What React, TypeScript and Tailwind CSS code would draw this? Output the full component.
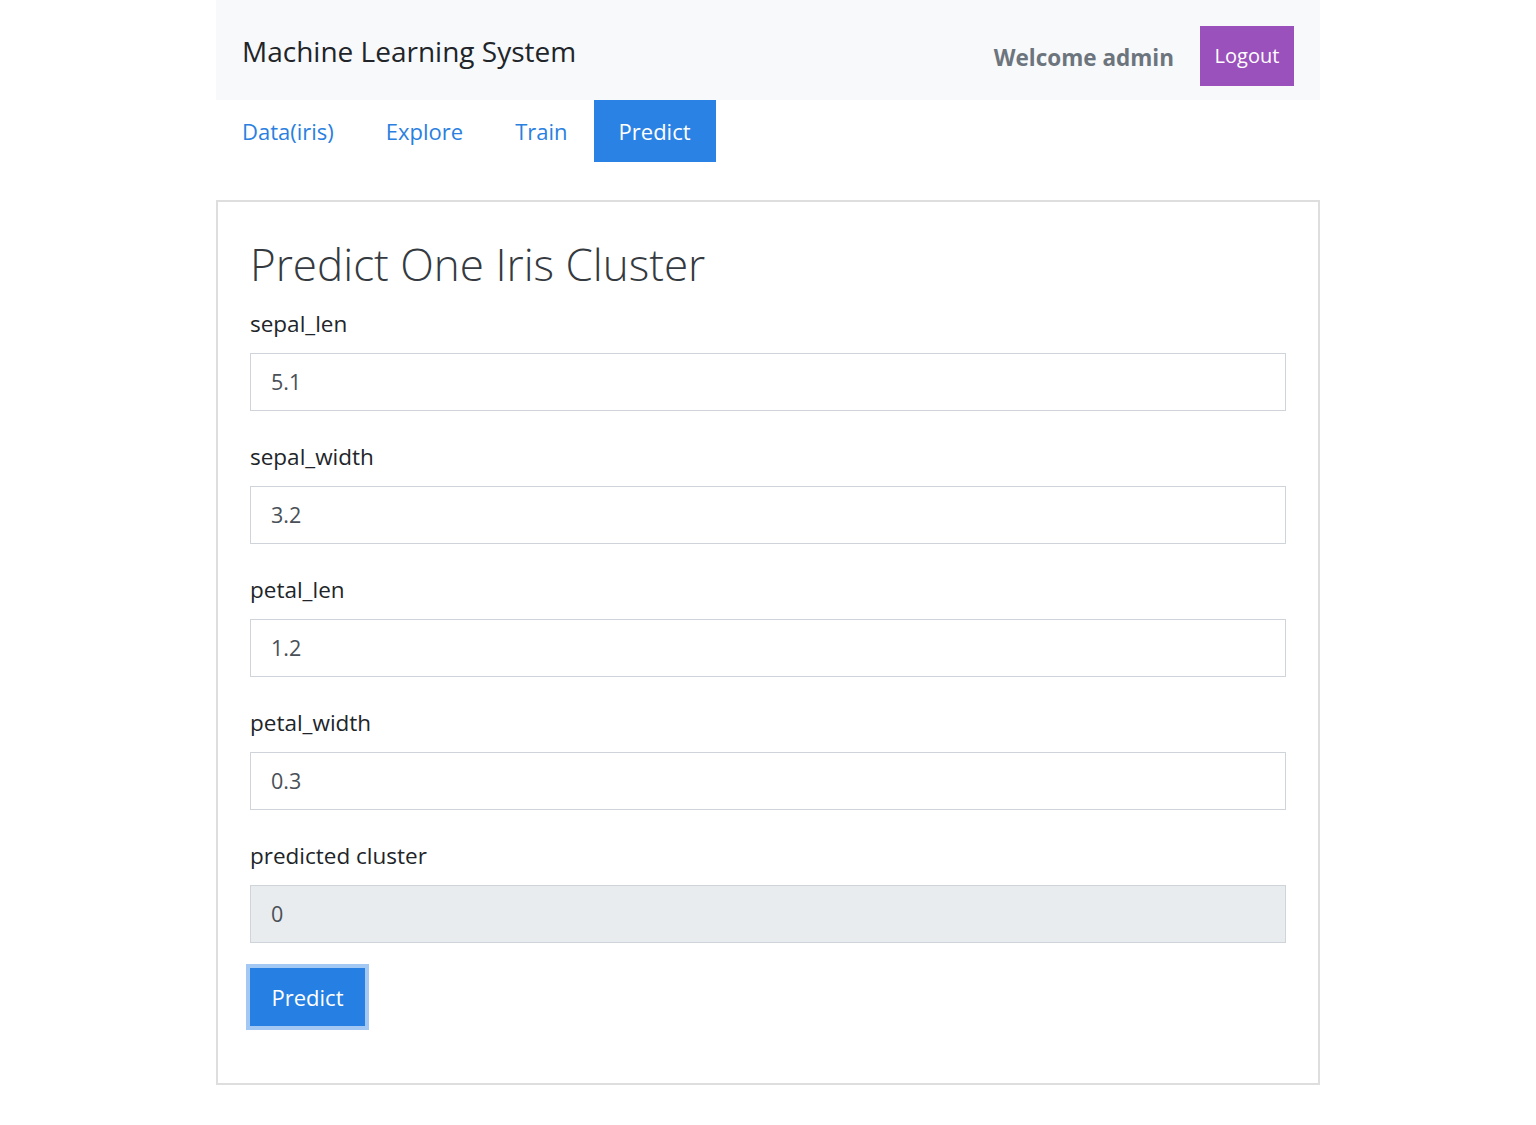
import React from "react";

const fields = [
  { label: "sepal_len", value: "5.1" },
  { label: "sepal_width", value: "3.2" },
  { label: "petal_len", value: "1.2" },
  { label: "petal_width", value: "0.3" },
];

export default function App() {
  return (
    <div className="min-h-[1125px] bg-white font-['Open_Sans',sans-serif] text-[#212529]">
      <div className="mx-auto w-[1104px]">
        <div className="flex h-[100px] items-center justify-between bg-[#f8f9fa] pl-[26px] pr-[26px]">
          <div className="pt-[2px] text-[28px] leading-none">Machine Learning System</div>
          <div className="flex items-center gap-[26px] pt-[12px]">
            <span className="pt-[3px] text-[22.5px] font-bold text-[#6c757d]">Welcome admin</span>
            <button className="flex h-[60px] w-[94px] items-center justify-center bg-[#9b51bb] text-[20px] text-white">
              Logout
            </button>
          </div>
        </div>

        <div className="flex h-[62px] items-stretch">
          <a className="flex items-center px-[26px] text-[22px] text-[#2a7fe0]">Data(iris)</a>
          <a className="flex items-center px-[26px] text-[22px] text-[#2a7fe0]">Explore</a>
          <a className="flex items-center px-[26px] text-[22px] text-[#2a7fe0]">Train</a>
          <a className="flex items-center bg-[#2a82e4] px-[25px] text-[22px] text-white">Predict</a>
        </div>

        <div className="mt-[38px] flex h-[885px] flex-col items-start border-2 border-[#dedede] px-[32px] pt-[32px]">
          <h1 className="text-[44px] font-light leading-[60px] text-[#343a40]">Predict One Iris Cluster</h1>
          {fields.map((f, i) => (
            <div key={f.label} className={i === 0 ? "mt-[12px] w-full" : "mt-[28px] w-full"}>
              <div className="h-[36px] text-[22.5px] leading-[36px]">{f.label}</div>
              <div className="mt-[11px] flex h-[58px] items-center border-[1.5px] border-[#ced4da] bg-white px-[20px] text-[21.5px] text-[#495057]">
                {f.value}
              </div>
            </div>
          ))}
          <div className="mt-[28px] w-full">
            <div className="h-[36px] text-[22.5px] leading-[36px]">predicted cluster</div>
            <div className="mt-[11px] flex h-[58px] items-center border-[1.5px] border-[#ced4da] bg-[#e9ecef] px-[20px] text-[21.5px] text-[#495057]">
              0
            </div>
          </div>
          <button className="mt-[21px] ml-[-4px] flex h-[66px] w-[123px] items-center justify-center border-[4px] border-[#a3c8f3] bg-[#2680e3] text-[22px] text-white">
            Predict
          </button>
        </div>
      </div>
    </div>
  );
}
